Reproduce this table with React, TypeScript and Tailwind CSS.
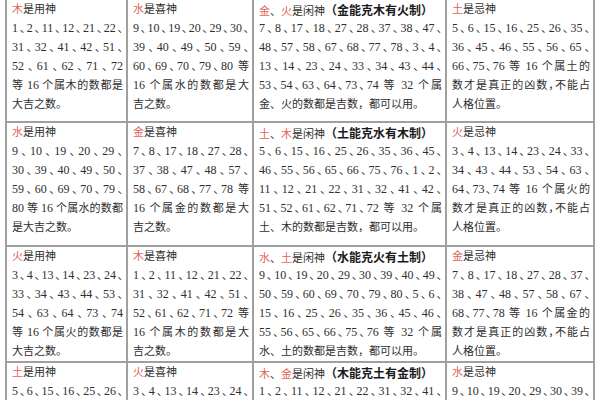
// 数理五行 用神 / 喜神 / 闲神 / 忌神 table

type Cell = {
  red: string[];
  rest: string;
  note?: string;
  lines: string[];
};

const ROWS: Cell[][] = [
  [
    {
      red: ['木'],
      rest: '是用神',
      lines: ['1、2、11、12、21、22、', '31、32、41、42、51、', '52、61、62、71、72', '等 16 个属木的数都是', '大吉之数。'],
    },
    {
      red: ['水'],
      rest: '是喜神',
      lines: ['9、10、19、20、29、30、', '39、40、49、50、59、', '60、69、70、79、80 等', '16 个属水的数都是大', '吉之数。'],
    },
    {
      red: ['金', '火'],
      rest: '是闲神',
      note: '（金能克木有火制）',
      lines: [
        '7、8、17、18、27、28、37、38、47、',
        '48、57、58、67、68、77、78、3、4、',
        '13、14、23、24、33、34、43、44、',
        '53、54、63、64、73、74 等 32 个属',
        '金、火的数都是吉数，都可以用。',
      ],
    },
    {
      red: ['土'],
      rest: '是忌神',
      lines: ['5、6、15、16、25、26、35、', '36、45、46、55、56、65、', '66、75、76 等 16 个属土的', '数才是真正的凶数，不能占', '人格位置。'],
    },
  ],
  [
    {
      red: ['水'],
      rest: '是用神',
      lines: ['9、10、19、20、29、', '30、39、40、49、50、', '59、60、69、70、79、', '80 等 16 个属水的数都', '是大吉之数。'],
    },
    {
      red: ['金'],
      rest: '是喜神',
      lines: ['7、8、17、18、27、28、', '37、38、47、48、57、', '58、67、68、77、78 等', '16 个属金的数都是大', '吉之数。'],
    },
    {
      red: ['土', '木'],
      rest: '是闲神',
      note: '（土能克水有木制）',
      lines: [
        '5、6、15、16、25、26、35、36、45、',
        '46、55、56、65、66、75、76、1、2、',
        '11、12、21、22、31、32、41、42、',
        '51、52、61、62、71、72 等 32 个属',
        '土、木的数都是吉数，都可以用。',
      ],
    },
    {
      red: ['火'],
      rest: '是忌神',
      lines: ['3、4、13、14、23、24、33、', '34、43、44、53、54、63、', '64、73、74 等 16 个属火的', '数才是真正的凶数，不能占', '人格位置。'],
    },
  ],
  [
    {
      red: ['火'],
      rest: '是用神',
      lines: ['3、4、13、14、23、24、', '33、34、43、44、53、', '54、63、64、73、74', '等 16 个属火的数都是', '大吉之数。'],
    },
    {
      red: ['木'],
      rest: '是喜神',
      lines: ['1、2、11、12、21、22、', '31、32、41、42、51、', '52、61、62、71、72 等', '16 个属木的数都是大', '吉之数。'],
    },
    {
      red: ['水', '土'],
      rest: '是闲神',
      note: '（水能克火有土制）',
      lines: [
        '9、10、19、20、29、30、39、40、49、',
        '50、59、60、69、70、79、80、5、6、',
        '15、16、25、26、35、36、45、46、',
        '55、56、65、66、75、76 等 32 个属',
        '水、土的数都是吉数，都可以用。',
      ],
    },
    {
      red: ['金'],
      rest: '是忌神',
      lines: ['7、8、17、18、27、28、37、', '38、47、48、57、58、67、', '68、77、78 等 16 个属金的', '数才是真正的凶数，不能占', '人格位置。'],
    },
  ],
  [
    {
      red: ['土'],
      rest: '是用神',
      lines: ['5、6、15、16、25、26、', '35、36、45、46、55、', '56、65、66、75、76', '等 16 个属土的数都是', '大吉之数。'],
    },
    {
      red: ['火'],
      rest: '是喜神',
      lines: ['3、4、13、14、23、24、', '33、34、43、44、53、', '54、63、64、73、74 等', '16 个属火的数都是大', '吉之数。'],
    },
    {
      red: ['木', '金'],
      rest: '是闲神',
      note: '（木能克土有金制）',
      lines: [
        '1、2、11、12、21、22、31、32、41、',
        '42、51、52、61、62、71、72、7、8、',
        '17、18、27、28、37、38、47、48、',
        '57、58、67、68、77、78 等 32 个属',
        '木、金的数都是吉数，都可以用。',
      ],
    },
    {
      red: ['水'],
      rest: '是忌神',
      lines: ['9、10、19、20、29、30、39、', '40、49、50、59、60、69、', '70、79、80 等 16 个属水的', '数才是真正的凶数，不能占', '人格位置。'],
    },
  ],
];

// digits a touch larger than the CJK text, as in the scan
function Line({ text }: { text: string }) {
  return (
    <>
      {text.split(/(\d+)/).map((part, i) =>
        /^\d+$/.test(part) ? (
          <span key={i} className="text-[12px]">
            {part}
          </span>
        ) : (
          part
        )
      )}
    </>
  );
}

function Title({ cell }: { cell: Cell }) {
  return (
    <div className="h-[19px] leading-[19px] whitespace-nowrap">
      {cell.red.map((ch, i) => (
        <span key={ch}>
          {i > 0 && '、'}
          <span className="text-[#e2625a]">{ch}</span>
        </span>
      ))}
      <span>{cell.rest}</span>
      {cell.note && (
        <span className="font-['Noto_Sans_CJK_SC',sans-serif] font-bold text-[12px] text-[#1a1a1a]">
          {cell.note}
        </span>
      )}
    </div>
  );
}

function TableCell({ cell }: { cell: Cell }) {
  return (
    <div className="border-r-2 border-b-2 border-[#a0a0a0] pl-[5px] pr-[3px] overflow-hidden">
      <Title cell={cell} />
      {cell.lines.map((line, i) => {
        const last = i === cell.lines.length - 1;
        return (
          <div
            key={i}
            className={
              last
                ? 'h-[19px] leading-[19px] whitespace-nowrap'
                : "h-[19px] leading-[19px] text-justify [text-align-last:justify] [font-feature-settings:'halt']"
            }
          >
            <Line text={line} />
          </div>
        );
      })}
    </div>
  );
}

export default function App() {
  return (
    <div className="w-[600px] h-[400px] overflow-hidden bg-white">
      <div className="ml-[5px] w-[590px] border-l-2 border-[#a0a0a0] grid grid-cols-[121px_126px_193px_148px] grid-rows-[123px_124px_116px_140px] font-['Liberation_Serif','Noto_Sans_CJK_SC',serif] text-[11px] text-[#2e2e2e]">
        {ROWS.map((row, r) =>
          row.map((cell, c) => <TableCell key={`${r}-${c}`} cell={cell} />)
        )}
      </div>
    </div>
  );
}
